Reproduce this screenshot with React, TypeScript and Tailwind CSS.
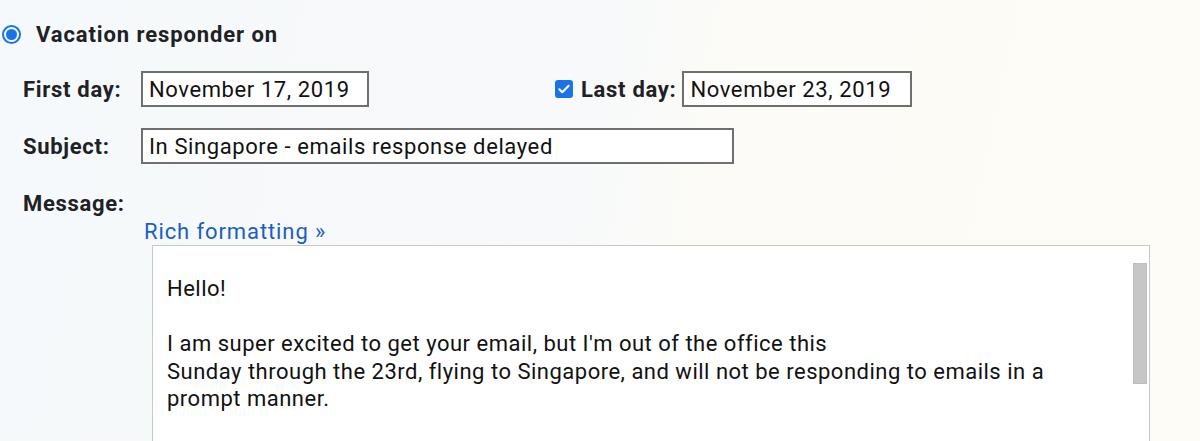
import { useState } from "react";

const Label = ({ children }: { children: React.ReactNode }) => (
  <div className="w-[118px] shrink-0 text-[22px] tracking-[0.7px] font-bold text-[#202124]">
    {children}
  </div>
);

const TextBox = ({ value, width }: { value: string; width: string }) => (
  <div
    className={`${width} h-[36px] border-2 border-[#6f6f6f] bg-white pl-[6px] flex items-center text-[22px] tracking-[0.6px] text-[#111] whitespace-nowrap overflow-hidden`}
  >
    {value}
  </div>
);

const message = [
  "Hello!",
  "",
  "I am super excited to get your email, but I'm out of the office this",
  "Sunday through the 23rd, flying to Singapore, and will not be responding to emails in a",
  "prompt manner.",
  "",
];

export default function App() {
  const [lastDayOn, setLastDayOn] = useState(true);

  return (
    <div
      className="w-[1200px] h-[441px] overflow-hidden bg-[linear-gradient(102deg,#f6f9fb_0%,#f7f9fa_48%,#fcfbf7_58%,#fdfcf6_100%)] pt-[22px]"
      style={{ fontFamily: "Roboto, 'Noto Sans', sans-serif" }}
    >
      <div className="flex items-center h-[24px] pl-[2px]">
        <div className="w-[19px] h-[19px] rounded-full border-2 border-[#1a73e8] flex items-center justify-center">
          <div className="w-[11px] h-[11px] rounded-full bg-[#1a73e8]" />
        </div>
        <span className="ml-[15px] text-[22px] tracking-[0.9px] font-bold text-[#202124]">
          Vacation responder on
        </span>
      </div>

      <div className="pl-[23px] mt-[25px] flex flex-col">
        <div className="flex items-center h-[36px]">
          <Label>First day:</Label>
          <TextBox value="November 17, 2019" width="w-[228px]" />
          <button
            onClick={() => setLastDayOn(!lastDayOn)}
            className="ml-[186px] w-[18px] h-[18px] rounded-[3px] bg-[#1a73e8] flex items-center justify-center"
          >
            {lastDayOn && (
              <svg width="14" height="14" viewBox="0 0 24 24">
                <path
                  d="M4 12.5l5 5L20 6.5"
                  fill="none"
                  stroke="white"
                  strokeWidth="3.6"
                  strokeLinecap="round"
                  strokeLinejoin="round"
                />
              </svg>
            )}
          </button>
          <span className="ml-[8px] mr-[6px] text-[22px] tracking-[0.7px] font-bold text-[#202124]">
            Last day:
          </span>
          <TextBox value="November 23, 2019" width="w-[230px]" />
        </div>

        <div className="flex items-center h-[36px] mt-[21px]">
          <Label>Subject:</Label>
          <TextBox
            value="In Singapore - emails response delayed"
            width="w-[593px]"
          />
        </div>

        <div className="mt-[25px] h-[28px] flex items-center">
          <Label>Message:</Label>
        </div>
        <a className="ml-[121px] h-[28px] flex items-center text-[22px] tracking-[0.9px] text-[#1a5fc0] cursor-pointer">
          Rich formatting »
        </a>

        <div className="ml-[129px] w-[998px] h-[220px] border border-[#c8c8c8] bg-white flex">
          <div className="flex-1 pl-[14px] pt-[29px] text-[22px] tracking-[0.5px] leading-[27.6px] text-[#111]">
            {message.map((line, i) => (
              <div key={i} className="h-[27.6px] whitespace-nowrap">
                {line}
              </div>
            ))}
          </div>
          <div className="w-[14px] mr-[2px] mt-[17px] h-[121px] bg-[#c6c6c6] border border-[#bdbdbd]" />
        </div>
      </div>
    </div>
  );
}
